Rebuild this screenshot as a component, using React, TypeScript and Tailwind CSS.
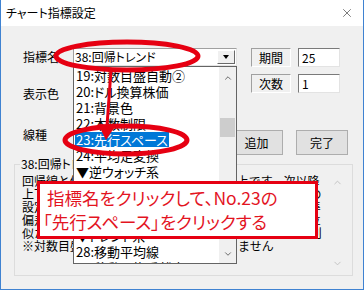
import { ChevronUp, ChevronDown, X } from "lucide-react";

const listItems = [
  { label: "19:対数目盛自動②" },
  { label: "20:ドル換算株価" },
  { label: "21:背景色" },
  { label: "22:本数制限" },
  { label: "23:先行スペース", selected: true },
  { label: "24:平均足変換" },
  { label: "▼逆ウォッチ系" },
  { label: "25:逆ウォッチ曲線" },
  { label: "26:逆ウォッチ(出来高)" },
  { label: "27:逆ウォッチ(代金)" },
  { label: "▼トレンド系" },
  { label: "28:移動平均線" },
  { label: "29:移動平均乖離率" },
];

// each line is 25 full-width characters, as the read-only box wraps it
const descLines = [
  "回帰線と偏差線を描画します。期間２以上です。次以降",
  "上下の線は回帰線からの標準偏差の倍率で、初期設定の",
  "設定は１倍と２倍です。終値価格のばらつきを表す標準",
  "偏差を使用しています。線の表示は株価と同じ価格単位",
  "似た形状の指標と重ねる場合は、表示色を変えると便利",
  "※対数目盛では回帰トレンドを表示できません",
];

const ui = "font-['Noto_Sans_CJK_JP','Noto_Sans',sans-serif] [font-feature-settings:'palt']";

const Combo = ({ text }: { text?: string }) => (
  <div className="flex items-center w-[164px] h-[18px] bg-white border border-t-[#a0a0a0] border-l-[#a0a0a0] border-r-[#e3e3e3] border-b-[#e3e3e3]">
    <span className="flex-1 pl-[1px] text-[12px] leading-[14px] text-black whitespace-nowrap">{text}</span>
    <div className="w-[18px] h-[14px] mr-[1px] flex items-center justify-center bg-[#f0f0f0] border border-t-white border-l-white border-r-[#696969] border-b-[#696969]">
      <div className="w-0 h-0 border-l-[3px] border-r-[3px] border-t-[4px] border-l-transparent border-r-transparent border-t-black" />
    </div>
  </div>
);

const FieldRow = ({ label, value }: { label: string; value: string }) => (
  <div className="flex items-center gap-[7px]">
    <div className="w-[40px] h-[19px] flex items-center justify-center text-[12px] text-black border border-t-[#a0a0a0] border-l-[#a0a0a0] border-r-white border-b-white bg-[#f0f0f0]">
      {label}
    </div>
    <div className="w-[42px] h-[19px] flex items-center pl-[3px] text-[12px] bg-white border border-t-[#7a7a7a] border-l-[#7a7a7a] border-r-[#e3e3e3] border-b-[#e3e3e3]">
      {value}
    </div>
  </div>
);

export default function App() {
  return (
    <div className={`relative w-[364px] h-[290px] overflow-hidden bg-[#f0f0f0] border-x border-b border-[#3f82d1] text-black ${ui}`}>
      {/* title bar */}
      <div className="flex items-center justify-between h-[26px] bg-white pl-[5px] pr-[9px]">
        <span className="text-[12px] leading-none">チャート指標設定</span>
        <X className="w-[14px] h-[14px] text-[#333]" strokeWidth={1.1} />
      </div>

      <div className="flex pt-[22px]">
        <div className="flex flex-col pl-[22px] w-[236px]">
          <div className="flex items-center h-[18px]">
            <span className="w-[50px] text-[12px]">指標名</span>
            <Combo text="38:回帰トレンド" />
          </div>
          <div className="flex items-center h-[18px] mt-[19px]">
            <span className="w-[50px] text-[12px]">表示色</span>
            <Combo />
          </div>
          <div className="flex items-center h-[18px] mt-[23px]">
            <span className="w-[50px] text-[12px]">線種</span>
            <Combo />
          </div>
        </div>
        <div className="flex flex-col ml-[14px]">
          <FieldRow label="期間" value="25" />
          <div className="mt-[7px]">
            <FieldRow label="次数" value="1" />
          </div>
          <div className="flex gap-[13px] mt-[37px] -ml-[21px]">
            <button className="w-[53px] h-[25px] text-[12px] bg-[#e1e1e1] border border-[#adadad]">追加</button>
            <button className="w-[52px] h-[25px] text-[12px] bg-[#e1e1e1] border border-[#adadad]">完了</button>
          </div>
        </div>
      </div>

      {/* group box */}
      <fieldset className="ml-[13px] mt-[2px] w-[339px] h-[119px] border border-[#dcdcdc] px-[3px] pb-[4px]">
        <legend className="ml-[2px] px-[1px] text-[12px] leading-[14px]">38:回帰トレンド</legend>
        <div className="flex h-[99px]">
          <div className="w-[308px] pl-[4px] pt-[3px] overflow-hidden text-[12px] leading-[13px] [font-feature-settings:normal]">
            {descLines.map((line, i) => (
              <div key={i} className="whitespace-nowrap">{line}</div>
            ))}
          </div>
          <div className="flex-1" />
          <div className="w-[17px] flex flex-col justify-between items-center pt-[6px] pb-[1px] mr-[3px]">
            <ChevronUp className="w-[11px] h-[11px] text-[#c0c0c0]" strokeWidth={2} />
            <ChevronDown className="w-[11px] h-[11px] text-[#c0c0c0]" strokeWidth={2} />
          </div>
        </div>
      </fieldset>

      {/* dropped list */}
      <div className="absolute left-[72px] top-[66px] w-[164px] h-[198px] flex bg-white border border-[#646464] overflow-hidden">
        <div className="flex-1 flex flex-col pl-[1px] pt-0">
          {listItems.map((item, i) => (
            <div key={i} className="h-[16px] shrink-0 flex items-center">
              <span
                className={`px-[1px] text-[13px] leading-[15px] whitespace-nowrap ${item.selected ? "bg-[#0078d7] text-white" : "text-black"}`}
              >
                {item.label}
              </span>
            </div>
          ))}
        </div>
        <div className="w-[17px] flex flex-col items-center bg-[#f0f0f0]">
          <ChevronUp className="w-[10px] h-[10px] mt-[6px] text-[#606060]" strokeWidth={2.2} />
          <div className="w-[15px] h-[19px] mt-[35px] bg-[#cdcdcd]" />
          <div className="flex-1" />
          <ChevronDown className="w-[10px] h-[10px] mb-[4px] text-[#606060]" strokeWidth={2.2} />
        </div>
      </div>

      {/* annotation marks */}
      <svg className="absolute left-0 top-0 pointer-events-none" width="364" height="290">
        <ellipse cx="126" cy="56" rx="71" ry="14" fill="none" stroke="#e60012" strokeWidth="5" />
        <ellipse cx="125" cy="140" rx="61" ry="14" fill="none" stroke="#e60012" strokeWidth="5" />
        <line x1="110" y1="70" x2="106" y2="126" stroke="#e60012" strokeWidth="3" />
        <polygon points="97,124 115,125 105,140" fill="#e60012" />
      </svg>

      {/* callout */}
      <div className="absolute left-[36px] top-[181px] w-[281px] h-[58px] flex flex-col justify-center pl-[7px] bg-white border-[3px] border-[#e60012] text-[#e3141f] font-['Noto_Sans_CJK_JP',sans-serif] text-[17.5px] leading-[24px]">
        <div className="whitespace-nowrap">指標名をクリックして、No.23の</div>
        <div className="whitespace-nowrap -ml-[4px]">「先行スペース」をクリックする</div>
      </div>
    </div>
  );
}
